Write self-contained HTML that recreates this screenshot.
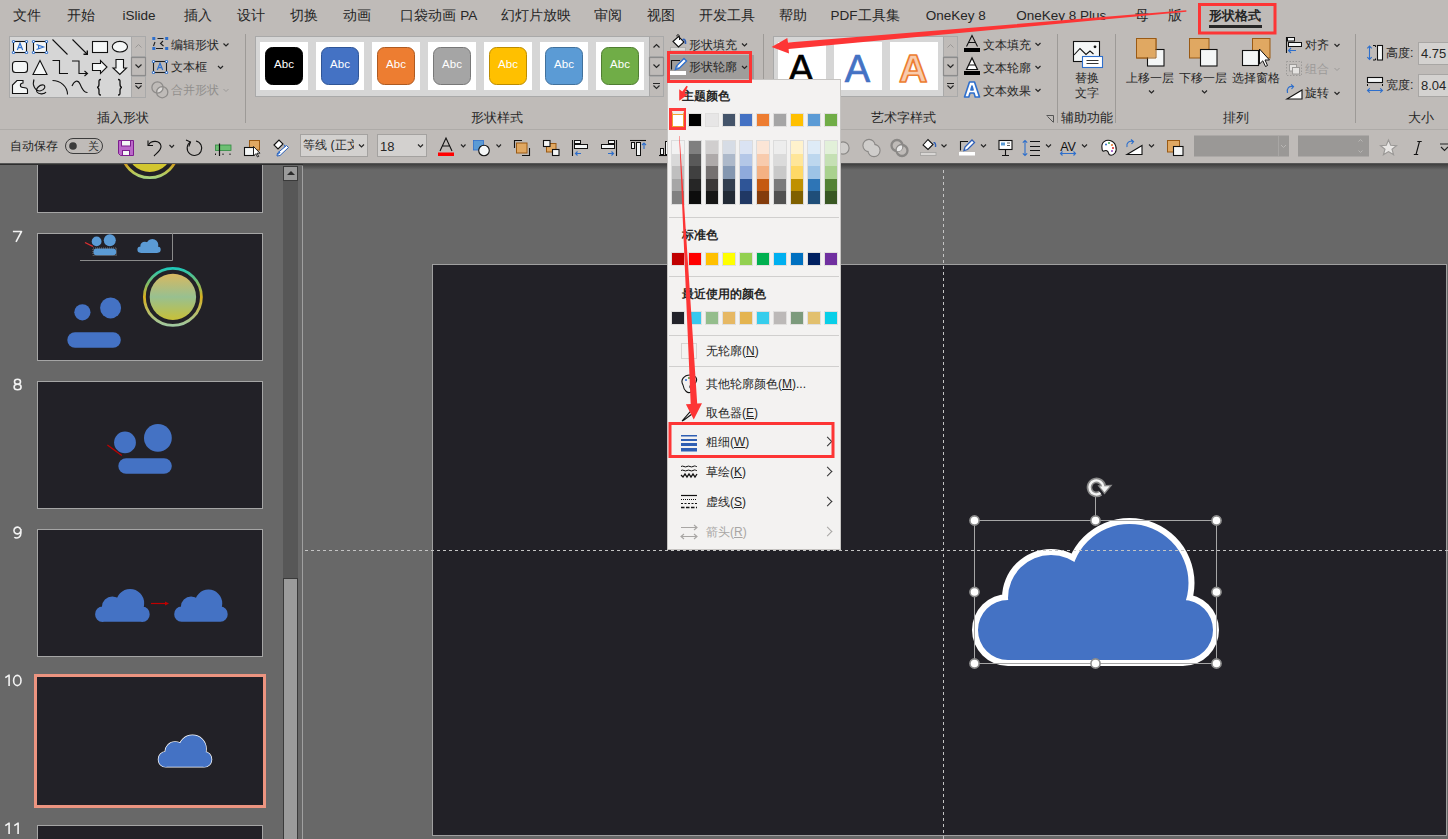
<!DOCTYPE html>
<html><head><meta charset="utf-8">
<style>
*{box-sizing:border-box}
html,body{margin:0;padding:0}
body{width:1448px;height:839px;overflow:hidden;position:relative;background:#686868;font-family:"Liberation Sans",sans-serif;color:#262626}
.a{position:absolute}
.t{position:absolute;white-space:nowrap;line-height:1}
.tab{position:absolute;top:8px;font-size:13.5px;line-height:16px;color:#262626;white-space:nowrap;transform:translateX(-50%)}
.gl{position:absolute;top:111px;font-size:12.5px;line-height:14px;color:#262626;white-space:nowrap;transform:translateX(-50%)}
.vd{position:absolute;top:34px;width:1px;height:89px;background:#9d9a97}
.thumb{position:absolute;left:37px;width:226px;height:128px;background:#222127;border:1px solid #a5a5a5;overflow:hidden}
.num{position:absolute;left:13px;font-size:15.5px;line-height:16px;color:#f4f4f4}
.sw{position:absolute;width:12px;height:12px;border:1px solid rgba(0,0,0,.08)}
.mi{position:absolute;left:706px;font-size:12px;line-height:14px;color:#262626;white-space:nowrap}
.chev{position:absolute;left:824px;width:7px;height:7px;border-right:1.3px solid #333;border-top:1.3px solid #333;transform:rotate(45deg)}
.sep{position:absolute;left:669px;width:170px;height:1px;background:#d0cfce}
</style></head><body>
<!-- ribbon background -->
<div class="a" style="left:0;top:0;width:1448px;height:164px;background:#bfbbb8"></div>
<div class="a" style="left:0;top:129px;width:1448px;height:1px;background:#aeaba8"></div>
<div class="a" style="left:0;top:163px;width:1448px;height:1px;background:#555"></div>

<!-- tabs -->
<div class="tab" style="left:26.9px">文件</div>
<div class="tab" style="left:80.6px">开始</div>
<div class="tab" style="left:139.1px">iSlide</div>
<div class="tab" style="left:197.9px">插入</div>
<div class="tab" style="left:251px">设计</div>
<div class="tab" style="left:304.2px">切换</div>
<div class="tab" style="left:356.8px">动画</div>
<div class="tab" style="left:438.8px">口袋动画 PA</div>
<div class="tab" style="left:535.8px">幻灯片放映</div>
<div class="tab" style="left:608px">审阅</div>
<div class="tab" style="left:660.5px">视图</div>
<div class="tab" style="left:726.7px">开发工具</div>
<div class="tab" style="left:792.6px">帮助</div>
<div class="tab" style="left:865.1px">PDF工具集</div>
<div class="tab" style="left:955.7px">OneKey 8</div>
<div class="tab" style="left:1061.3px">OneKey 8 Plus</div>
<div class="tab" style="left:1142px">母</div>
<div class="tab" style="left:1175px">版</div>
<div class="tab" style="left:1234.5px;font-weight:bold;font-size:13px">形状格式</div>
<div class="a" style="left:1209px;top:25px;width:53px;height:3px;background:#262626"></div>

<!-- ribbon group 1: insert shapes -->
<svg class="a" style="left:0;top:0" width="250" height="130" viewBox="0 0 250 130">
 <rect x="9.5" y="36.5" width="136" height="61" fill="#d6d6d6" stroke="#a9a9a9"/>
 <rect x="131.5" y="36.5" width="14" height="20" fill="#bfbbb8" stroke="#a9a9a9"/>
 <rect x="131.5" y="57.5" width="14" height="18" fill="#bfbbb8" stroke="#8c8c8c" stroke-width="1.2"/>
 <rect x="131.5" y="76.5" width="14" height="21" fill="#bfbbb8" stroke="#a9a9a9"/>
 <path d="M135.5 47.5 L138.5 44.5 L141.5 47.5" fill="none" stroke="#9a9896" stroke-width="1"/>
 <path d="M135.5 64.5 L138.5 67.5 L141.5 64.5" fill="none" stroke="#262626" stroke-width="1.2"/>
 <path d="M135 83.5 H142 M135.5 85.5 L138.5 88.5 L141.5 85.5" fill="none" stroke="#262626" stroke-width="1.1"/>
 <g fill="#f4f6f6" stroke="#111" stroke-width="1.1">
  <rect x="13.5" y="41.5" width="13" height="11"/>
  <rect x="33.5" y="41.5" width="13" height="11"/>
  <rect x="92.5" y="41.5" width="15" height="11"/>
  <ellipse cx="119.9" cy="46.7" rx="7.6" ry="5.3"/>
  <rect x="12.5" y="61.5" width="15" height="11" rx="3"/>
  <path d="M40 60.5 L47 74.5 L33 74.5 Z"/>
  <path d="M92.5 63.5 H100.5 V60.5 L107 67 L100.5 73.5 V70.5 H92.5 Z"/>
  <path d="M116 59.5 H123.5 V68 H126.5 L119.8 74.5 L113 68 H116 Z"/>
  <path d="M12.5 93.5 V85 L17 80.5 H23 V83 C19.5 83 19.5 87.5 23 87.5 C26.5 87.5 27.5 88 27.5 90 V93.5 Z"/>
 </g>
 <g fill="#2e6fcc">
  <circle cx="13.5" cy="41.5" r="1.6"/><circle cx="26.5" cy="41.5" r="1.6"/><circle cx="13.5" cy="52.5" r="1.6"/><circle cx="26.5" cy="52.5" r="1.6"/>
  <circle cx="33.5" cy="41.5" r="1.6"/><circle cx="46.5" cy="41.5" r="1.6"/><circle cx="33.5" cy="52.5" r="1.6"/><circle cx="46.5" cy="52.5" r="1.6"/>
 </g>
 <g fill="#fff"><circle cx="13.5" cy="41.5" r=".7"/><circle cx="26.5" cy="41.5" r=".7"/><circle cx="13.5" cy="52.5" r=".7"/><circle cx="26.5" cy="52.5" r=".7"/><circle cx="33.5" cy="41.5" r=".7"/><circle cx="46.5" cy="41.5" r=".7"/><circle cx="33.5" cy="52.5" r=".7"/><circle cx="46.5" cy="52.5" r=".7"/></g>
 <path d="M17.3 50 L20 43.2 L22.7 50 M18.3 47.7 H21.7" fill="none" stroke="#2e6fcc" stroke-width="1.2"/>
 <path d="M36.5 44.5 L43.5 47 L36.5 49.5 M38.6 45.3 V48.7" fill="none" stroke="#2e6fcc" stroke-width="1.2"/>
 <g fill="none" stroke="#111" stroke-width="1.1">
  <path d="M52.5 39.5 L67.5 54.5"/>
  <path d="M72.5 39.5 L87 54"/><path d="M83.5 54.2 H87.3 V50.4" stroke-width="1.4"/>
  <path d="M52.5 60.5 H59.5 V73.5 H68"/>
  <path d="M72 61 H79 V73.5 H87.5 M84.5 71 L87.5 73.5 L84.5 76"/>
  <path d="M34 79.5 C32 85 35 91 40 91 C45 90 46 86 43.5 85 C40 84 35 89 37 92 C39 95 45 94 46 92"/>
  <path d="M52.5 80.5 C60 80.5 67.5 86 67.5 94.5"/>
  <path d="M72 86 C74 81 78 79 80 84 C82 89 84 93 87.5 92.5"/>
  <path d="M101 79.5 C98.5 79.5 99 81 99 84 C99 86.5 98 87.3 97 87.3 C98 87.3 99 88 99 90.5 C99 93.5 98.5 95 101 95" stroke-width="1.3"/>
  <path d="M118 79.5 C120.5 79.5 120 81 120 84 C120 86.5 121 87.3 122 87.3 C121 87.3 120 88 120 90.5 C120 93.5 120.5 95 118 95" stroke-width="1.3"/>
 </g>
 <!-- edit shape / textbox / merge -->
 <g fill="none" stroke="#1e1e1e" stroke-width="1.1">
  <path d="M157.5 38.5 H163.5 M153.5 46 L155 42 M156 48.5 H163 M163 41 L160.5 43.5 L163.5 46"/>
  <rect x="153.5" y="61.5" width="13" height="11"/>
 </g>
 <g fill="#2e6fcc"><rect x="152.3" y="37" width="3" height="3"/><rect x="165.2" y="37" width="3" height="3"/><rect x="152.3" y="47" width="3" height="3"/><rect x="165.2" y="47" width="3" height="3"/>
  <circle cx="153.5" cy="61.5" r="1.6"/><circle cx="166.5" cy="61.5" r="1.6"/><circle cx="153.5" cy="72.5" r="1.6"/><circle cx="166.5" cy="72.5" r="1.6"/></g>
 <g fill="#fff"><circle cx="153.5" cy="61.5" r=".7"/><circle cx="166.5" cy="61.5" r=".7"/><circle cx="153.5" cy="72.5" r=".7"/><circle cx="166.5" cy="72.5" r=".7"/></g>
 <path d="M157.3 70 L160 63.2 L162.7 70 M158.3 67.7 H161.7" fill="none" stroke="#2e6fcc" stroke-width="1.2"/>
 <path d="M157.5 93 C156.5 89.5 159 87 162.5 87.5 C163.5 91 161 93.5 157.5 93 Z" fill="#dcdad8"/>
 <g fill="none" stroke="#8e8c8a" stroke-width="1.3"><circle cx="157.5" cy="87.5" r="5.6"/><circle cx="162.2" cy="92.2" r="5.6"/></g>
 <g fill="none" stroke="#262626" stroke-width="1.2"><path d="M223.5 43.5 L226 46 L228.5 43.5"/><path d="M218 66 L220.5 68.5 L223 66"/></g>
 <path d="M223.5 89 L226 91.5 L228.5 89" fill="none" stroke="#9c9a98" stroke-width="1"/>
</svg>
<div class="t" style="left:171px;top:38px;font-size:12px;line-height:14px;color:#262626">编辑形状</div>
<div class="t" style="left:171px;top:60px;font-size:12px;line-height:14px;color:#262626">文本框</div>
<div class="t" style="left:171px;top:83px;font-size:12px;line-height:14px;color:#918f8d">合并形状</div>

<!-- ribbon group 2: shape styles -->
<svg class="a" style="left:250px;top:0" width="520" height="130" viewBox="250 0 520 130">
 <rect x="255.5" y="36.5" width="394" height="60" fill="#d6d6d6" stroke="#a9a9a9"/>
 <rect x="260" y="42" width="48" height="48" fill="#fff"/>
 <rect x="265.5" y="47.5" width="37" height="37" rx="7" fill="#000000" stroke="#000000"/>
 <text x="284" y="68" text-anchor="middle" font-family="Liberation Sans" font-size="11.5" fill="#fff">Abc</text>
 <rect x="316" y="42" width="48" height="48" fill="#fff"/>
 <rect x="321.5" y="47.5" width="37" height="37" rx="7" fill="#4472c4" stroke="#2f5597"/>
 <text x="340" y="68" text-anchor="middle" font-family="Liberation Sans" font-size="11.5" fill="#fff">Abc</text>
 <rect x="372" y="42" width="48" height="48" fill="#fff"/>
 <rect x="377.5" y="47.5" width="37" height="37" rx="7" fill="#ed7d31" stroke="#ae5a21"/>
 <text x="396" y="68" text-anchor="middle" font-family="Liberation Sans" font-size="11.5" fill="#fff">Abc</text>
 <rect x="428" y="42" width="48" height="48" fill="#fff"/>
 <rect x="433.5" y="47.5" width="37" height="37" rx="7" fill="#a5a5a5" stroke="#787878"/>
 <text x="452" y="68" text-anchor="middle" font-family="Liberation Sans" font-size="11.5" fill="#fff">Abc</text>
 <rect x="484" y="42" width="48" height="48" fill="#fff"/>
 <rect x="489.5" y="47.5" width="37" height="37" rx="7" fill="#ffc000" stroke="#bc8c00"/>
 <text x="508" y="68" text-anchor="middle" font-family="Liberation Sans" font-size="11.5" fill="#fff">Abc</text>
 <rect x="540" y="42" width="48" height="48" fill="#fff"/>
 <rect x="545.5" y="47.5" width="37" height="37" rx="7" fill="#5b9bd5" stroke="#41719c"/>
 <text x="564" y="68" text-anchor="middle" font-family="Liberation Sans" font-size="11.5" fill="#fff">Abc</text>
 <rect x="596" y="42" width="48" height="48" fill="#fff"/>
 <rect x="601.5" y="47.5" width="37" height="37" rx="7" fill="#70ad47" stroke="#507e32"/>
 <text x="620" y="68" text-anchor="middle" font-family="Liberation Sans" font-size="11.5" fill="#fff">Abc</text>
 <rect x="649.5" y="36.5" width="14" height="20" fill="#bfbbb8" stroke="#a9a9a9"/>
 <rect x="649.5" y="57.5" width="14" height="18" fill="#bfbbb8" stroke="#8c8c8c" stroke-width="1.2"/>
 <rect x="649.5" y="76.5" width="14" height="20" fill="#bfbbb8" stroke="#a9a9a9"/>
 <path d="M653.5 47.5 L656.5 44.5 L659.5 47.5" fill="none" stroke="#262626" stroke-width="1.2"/>
 <path d="M653.5 64.5 L656.5 67.5 L659.5 64.5" fill="none" stroke="#262626" stroke-width="1.2"/>
 <path d="M653 83.5 H660 M653.5 85.5 L656.5 88.5 L659.5 85.5" fill="none" stroke="#262626" stroke-width="1.1"/>
 <rect x="670.5" y="47.5" width="15" height="3.5" fill="#dcdad8" stroke="#aaa8a6" stroke-width=".8"/>
 <path d="M673 41.5 L678.5 36.5 L684 42 L678.5 47 Z" fill="#fff" stroke="#111" stroke-width="1.1"/>
 <path d="M677 36.5 C676.5 34 679 34 679.5 36.5 V40" fill="none" stroke="#111" stroke-width="1"/>
 <path d="M682.5 40 C684 38.5 686 39.5 685.5 44" fill="none" stroke="#2e5fb8" stroke-width="1.6"/>
 <rect x="669" y="55" width="85" height="25" fill="#9f9d9b"/>
 <path d="M671.5 69.5 V60.5 H680" fill="none" stroke="#111" stroke-width="1.1"/>
 <path d="M675.5 69.5 L676.5 66 L684 58.5 L686.5 61 L679 68.5 Z" fill="#fff" stroke="#2e6fcc" stroke-width="1.4"/>
 <path d="M676.5 66 L679 68.5" stroke="#2e6fcc" stroke-width="1"/>
 <rect x="670" y="71" width="16" height="4" fill="#fff"/>
 <path d="M742 43.5 L744.5 46 L747 43.5" fill="none" stroke="#262626" stroke-width="1.2"/>
 <path d="M742 66 L744.5 68.5 L747 66" fill="none" stroke="#262626" stroke-width="1.2"/>
</svg>
<div class="t" style="left:689px;top:38px;font-size:12px;line-height:14px;color:#262626">形状填充</div>
<div class="t" style="left:689px;top:60px;font-size:12px;line-height:14px;color:#262626">形状轮廓</div>
<!-- ribbon group 3: wordart -->
<svg class="a" style="left:760px;top:0" width="300" height="130" viewBox="760 0 300 130">
 <rect x="773.5" y="36.5" width="170" height="60" fill="#d6d6d6" stroke="#a9a9a9"/>
 <rect x="778" y="42" width="48" height="48" fill="#fff"/>
 <rect x="834" y="42" width="48" height="48" fill="#fff"/>
 <rect x="890" y="42" width="48" height="48" fill="#fff"/>
 <text x="801" y="81.5" text-anchor="middle" font-family="Liberation Sans" font-size="38" fill="#000" stroke="#000" stroke-width=".7">A</text>
 <text x="857.5" y="81.5" text-anchor="middle" font-family="Liberation Sans" font-size="38" fill="#4472c4" stroke="#4472c4" stroke-width=".7">A</text>
 <text x="913.3" y="81.5" text-anchor="middle" font-family="Liberation Sans" font-size="39.5" font-weight="bold" fill="#f8cbad" stroke="#ed7d31" stroke-width="1.7" stroke-linejoin="round">A</text>
 <rect x="943.5" y="36.5" width="14" height="20" fill="#bfbbb8" stroke="#a9a9a9"/>
 <rect x="943.5" y="57.5" width="14" height="18" fill="#bfbbb8" stroke="#8c8c8c" stroke-width="1.2"/>
 <rect x="943.5" y="76.5" width="14" height="20" fill="#bfbbb8" stroke="#a9a9a9"/>
 <path d="M947.5 47.5 L950.5 44.5 L953.5 47.5" fill="none" stroke="#9a9896" stroke-width="1"/>
 <path d="M947.5 64.5 L950.5 67.5 L953.5 64.5" fill="none" stroke="#262626" stroke-width="1.2"/>
 <path d="M947 83.5 H954 M947.5 85.5 L950.5 88.5 L953.5 85.5" fill="none" stroke="#262626" stroke-width="1.1"/>
 <path d="M966.5 46.5 L972 35.5 L977.5 46.5 M968.5 42.5 H975.5" fill="none" stroke="#111" stroke-width="1.1"/>
 <rect x="964" y="48" width="16" height="4" fill="#000"/>
 <path d="M966.5 69.5 L972 58 L977.5 69.5 Z" fill="#fff" stroke="#111" stroke-width="1.2"/><path d="M969 65 H975" stroke="#111" stroke-width="1"/>
 <rect x="964" y="71" width="16" height="4" fill="#000"/>
 <path d="M964.5 97 L969.5 82 H974.5 L979.5 97 H975.2 L974 93 H970 L968.8 97 Z M970.9 90 H973.1 L972 86 Z" fill="#fff" stroke="#2e6fcc" stroke-width="1.6" stroke-linejoin="round"/>
 <path d="M1035.5 43 L1038 45.5 L1040.5 43" fill="none" stroke="#262626" stroke-width="1.2"/>
 <path d="M1035.5 66 L1038 68.5 L1040.5 66" fill="none" stroke="#262626" stroke-width="1.2"/>
 <path d="M1035.5 89 L1038 91.5 L1040.5 89" fill="none" stroke="#262626" stroke-width="1.2"/>
 <path d="M1046.5 115.5 H1053.5 V122.5 M1047.5 116.5 L1053 122" fill="none" stroke="#555" stroke-width="1"/>
</svg>
<div class="t" style="left:983px;top:38px;font-size:12px;line-height:14px;color:#262626">文本填充</div>
<div class="t" style="left:983px;top:61px;font-size:12px;line-height:14px;color:#262626">文本轮廓</div>
<div class="t" style="left:983px;top:84px;font-size:12px;line-height:14px;color:#262626">文本效果</div>
<!-- ribbon groups 4-6 -->
<svg class="a" style="left:1060px;top:0" width="388" height="130" viewBox="1060 0 388 130">
 <rect x="1073.5" y="41.5" width="26" height="20" fill="#f4f6f6" stroke="#111" stroke-width="1.1"/>
 <path d="M1074 55 L1080 48.5 L1086 54.5 L1090 51 L1093.5 54" fill="none" stroke="#111" stroke-width="1.1"/>
 <circle cx="1095" cy="46.8" r="1.4" fill="#111"/>
 <rect x="1082.5" y="56.5" width="20" height="11" fill="#fff" stroke="#2e6fcc" stroke-width="1.1"/>
 <path d="M1086.5 60.5 H1098.5 M1086.5 63.5 H1098.5" stroke="#333" stroke-width="1"/>
 <g stroke="#9a5a14" stroke-width="1" fill="#e0a862">
  <rect x="1136.5" y="38.5" width="19.5" height="19.5"/>
  <rect x="1189.5" y="38.5" width="19.5" height="19.5"/>
  <rect x="1252.5" y="38.5" width="17.5" height="19.5"/>
 </g>
 <g stroke="#111" stroke-width="1.1" fill="#f4f6f6">
  <rect x="1147.5" y="49.5" width="16.5" height="16.5"/>
  <rect x="1200.5" y="49.5" width="16.5" height="16.5"/>
  <rect x="1242.5" y="50.5" width="16" height="15"/>
 </g>
 <path d="M1147.5 57.5 V49.5 H1156" fill="none" stroke="#f4f6f6" stroke-width="0"/>
 <rect x="1137" y="39" width="18.5" height="18.5" fill="#e0a862"/>
 <path d="M1136.5 38.5 H1156 V58 H1136.5 Z" fill="none" stroke="#9a5a14" stroke-width="1"/>
 <path d="M1259.5 49 L1259.5 64 L1262.8 60.8 L1265.5 66.5 L1267.5 65.5 L1265 60 L1269.5 60 Z" fill="#fff" stroke="#111" stroke-width="1"/>
 <g fill="none" stroke="#262626" stroke-width="1.2"><path d="M1149 90.5 L1151.5 93 L1154 90.5"/><path d="M1202 90.5 L1204.5 93 L1207 90.5"/></g>
 <!-- align -->
 <path d="M1286.5 37 V53" stroke="#111" stroke-width="1.1"/>
 <rect x="1287.5" y="37.5" width="7" height="3.5" fill="#f4f6f6" stroke="#111" stroke-width="1"/>
 <rect x="1288.5" y="42.5" width="13" height="4" fill="#f4f6f6" stroke="#111" stroke-width="1"/>
 <path d="M1296 50.5 H1288.5 M1291 48 L1288.5 50.5 L1291 53" fill="none" stroke="#2e6fcc" stroke-width="1.1"/>
 <g fill="none" stroke="#9c9a98" stroke-width="1" stroke-dasharray="1.5 1.5"><rect x="1286.5" y="61.5" width="15" height="14"/></g>
 <g fill="#e4e2e0" stroke="#9c9a98" stroke-width="1"><rect x="1289.5" y="64.5" width="7" height="6.5"/><rect x="1292.5" y="67.5" width="7" height="6.5"/></g>
 <path d="M1287 99 L1302 90 V99 Z" fill="#fff" stroke="#111" stroke-width="1.1"/>
 <path d="M1287.5 93 C1286.5 88 1289 86 1293 86.5 M1291 84.5 L1293.5 86.5 L1291.5 89" fill="none" stroke="#2e6fcc" stroke-width="1.2"/>
 <g fill="none" stroke="#262626" stroke-width="1.2"><path d="M1334.5 44 L1337 46.5 L1339.5 44"/><path d="M1334.5 92 L1337 94.5 L1339.5 92"/></g>
 <path d="M1334.5 68 L1337 70.5 L1339.5 68" fill="none" stroke="#9c9a98" stroke-width="1"/>
 <!-- size -->
 <rect x="1377.5" y="45.5" width="5" height="14.5" fill="#f4f6f6" stroke="#111" stroke-width="1.1"/>
 <path d="M1373 45.5 H1375.5 V47 M1375.5 58.5 V60 H1373" fill="none" stroke="#111" stroke-width="1"/>
 <path d="M1369.5 46 V59.5 M1367.3 48.3 L1369.5 46 L1371.7 48.3 M1367.3 57.2 L1369.5 59.5 L1371.7 57.2" fill="none" stroke="#2e6fcc" stroke-width="1.1"/>
 <rect x="1367.5" y="77.5" width="15" height="5" fill="#f4f6f6" stroke="#111" stroke-width="1.1"/>
 <path d="M1367.5 84 V86 M1382.5 84 V86" stroke="#111" stroke-width="1"/>
 <path d="M1367.5 90.5 H1382.5 M1369.8 88.3 L1367.5 90.5 L1369.8 92.7 M1380.2 88.3 L1382.5 90.5 L1380.2 92.7" fill="none" stroke="#2e6fcc" stroke-width="1.1"/>
 <rect x="1418.5" y="42.5" width="40" height="22" fill="#d4d2d0" stroke="#a8a6a4"/>
 <rect x="1418.5" y="74.5" width="40" height="22" fill="#d4d2d0" stroke="#a8a6a4"/>
</svg>
<div class="t" style="left:1075px;top:71px;font-size:12.4px;line-height:14px">替换</div>
<div class="t" style="left:1075px;top:86px;font-size:12.4px;line-height:14px">文字</div>
<div class="t" style="left:1126px;top:71px;font-size:12.4px;line-height:14px">上移一层</div>
<div class="t" style="left:1179px;top:71px;font-size:12.4px;line-height:14px">下移一层</div>
<div class="t" style="left:1232px;top:71px;font-size:12.4px;line-height:14px">选择窗格</div>
<div class="t" style="left:1305px;top:38px;font-size:12.4px;line-height:14px">对齐</div>
<div class="t" style="left:1305px;top:62px;font-size:12.4px;line-height:14px;color:#9c9a98">组合</div>
<div class="t" style="left:1305px;top:86px;font-size:12.4px;line-height:14px">旋转</div>
<div class="t" style="left:1386px;top:46px;font-size:12.4px;line-height:14px">高度:</div>
<div class="t" style="left:1386px;top:78px;font-size:12.4px;line-height:14px">宽度:</div>
<div class="t" style="left:1421px;top:46px;font-size:13px;line-height:15px">4.75</div>
<div class="t" style="left:1421px;top:78px;font-size:13px;line-height:15px">8.04</div>

<!-- group labels -->
<div class="gl" style="left:123px">插入形状</div>
<div class="gl" style="left:497px">形状样式</div>
<div class="gl" style="left:903px">艺术字样式</div>
<div class="gl" style="left:1087px">辅助功能</div>
<div class="gl" style="left:1236px">排列</div>
<div class="gl" style="left:1421px">大小</div>
<div class="vd" style="left:245px"></div>
<div class="vd" style="left:763px"></div>
<div class="vd" style="left:1057px"></div>
<div class="vd" style="left:1115px"></div>
<div class="vd" style="left:1355px"></div>

<!-- quick access toolbar -->
<div class="t" style="left:10px;top:139px;font-size:12.4px;line-height:14px">自动保存</div>
<svg class="a" style="left:0;top:130px" width="1448" height="34" viewBox="0 130 1448 34">
 <rect x="65.5" y="138.5" width="37" height="15" rx="7.5" fill="none" stroke="#3c3c3c" stroke-width="1"/>
 <circle cx="73" cy="146" r="3.8" fill="#3a3a3a"/>
 <!-- save -->
 <path d="M118.5 140.5 H133.5 V155.5 H120.5 L118.5 153.5 Z" fill="#bb68c9" stroke="#7c1c8e" stroke-width="1"/>
 <rect x="121.5" y="140.5" width="9" height="5.5" fill="#f4f6f6" stroke="#7c1c8e" stroke-width="1"/>
 <rect x="122.5" y="150.5" width="7" height="5" fill="#f4f6f6" stroke="#7c1c8e" stroke-width="1"/>
 <!-- undo/redo -->
 <path d="M148.5 145 C151 140 160 140 161 146 C161.5 150 157 153 154 156" fill="none" stroke="#111" stroke-width="1.1"/>
 <path d="M148 140.5 V145.5 H153" fill="none" stroke="#111" stroke-width="1.1"/>
 <path d="M169.5 145 L171.8 147.3 L174 145" fill="none" stroke="#262626" stroke-width="1.2"/>
 <path d="M190.5 142 A7.3 7.3 0 1 0 196 141" fill="none" stroke="#111" stroke-width="1.1"/>
 <path d="M186 140 L190.5 142 L188.8 146.5" fill="none" stroke="#111" stroke-width="1.1"/>
 <!-- green -->
 <rect x="215.5" y="145" width="15.5" height="5.5" fill="#6dbf73" stroke="#2f8a3f" stroke-width=".8"/>
 <path d="M219.5 143.5 V156" stroke="#111" stroke-width="1.2"/>
 <path d="M215.5 153.5 V155 M223 153.5 V155 M230 153.5 V155" stroke="#111" stroke-width="1"/>
 <!-- select -->
 <rect x="249.5" y="140.5" width="10" height="9.5" fill="#e0a862" stroke="#9a5a14" stroke-width="1"/>
 <rect x="244.5" y="147.5" width="9.5" height="8" fill="#f4f6f6" stroke="#111" stroke-width="1.1"/>
 <path d="M253.5 146.5 V156 L255.8 153.7 L257.5 157 L258.7 156.4 L257 153.2 L260 153.2 Z" fill="#fff" stroke="#111" stroke-width=".9"/>
 <!-- format painter -->
 <path d="M274 145 L279 140 L283 144 L278 149 Z" fill="#fff" stroke="#111" stroke-width="1.1"/>
 <path d="M284 145 C286 146 285 148 283 149" fill="none" stroke="#2e6fcc" stroke-width="1.2"/>
 <path d="M288.5 147.5 L280 155.5 L277 156 L277.5 153 L286.5 145.5 Z" fill="#fff" stroke="#2a5fb8" stroke-width="1"/>
 <path d="M277 156 L280.5 152.5 L279 151 Z" fill="#2e6fcc"/>
 <!-- combos -->
 <rect x="300.5" y="134.5" width="67" height="22" fill="#d3d1cf" stroke="#a4a2a0"/>
 <rect x="377.5" y="134.5" width="49" height="22" fill="#d3d1cf" stroke="#a4a2a0"/>
 <path d="M359 144.5 L361.5 147 L364 144.5" fill="none" stroke="#262626" stroke-width="1.2"/>
 <path d="M418 144.5 L420.5 147 L423 144.5" fill="none" stroke="#262626" stroke-width="1.2"/>
 <!-- font color -->
 <path d="M440 151 L446 138 L452 151 M442.3 146 H449.7" fill="none" stroke="#111" stroke-width="1.1"/>
 <rect x="438" y="152.5" width="16" height="3.5" fill="#ff0000"/>
 <path d="M461 144.5 L463.3 146.8 L465.5 144.5" fill="none" stroke="#262626" stroke-width="1.2"/>
 <!-- shape fill -->
 <rect x="473.5" y="140.5" width="10" height="9.5" fill="#5b9bd5" stroke="#2e6fcc" stroke-width=".8"/>
 <circle cx="484" cy="150.5" r="5.3" fill="#f4f6f6" stroke="#111" stroke-width="1.1"/>
 <path d="M496.5 144.5 L498.8 146.8 L501 144.5" fill="none" stroke="#262626" stroke-width="1.2"/>
 <!-- group -->
 <path d="M514.5 148 V140.5 H522" fill="none" stroke="#111" stroke-width="1.1"/>
 <rect x="516.5" y="143" width="10.5" height="10" fill="#e0a862" stroke="#9a5a14" stroke-width="1"/>
 <path d="M529.5 148 V155.5 H522" fill="none" stroke="#111" stroke-width="1.1"/>
 <!-- ungroup -->
 <rect x="546.5" y="143.5" width="9.5" height="8.5" fill="#e0a862" stroke="#9a5a14" stroke-width="1"/>
 <rect x="543.5" y="140.5" width="6.5" height="6" fill="#f4f6f6" stroke="#111" stroke-width="1.1"/>
 <rect x="552.5" y="149.5" width="6.5" height="6" fill="#f4f6f6" stroke="#111" stroke-width="1.1"/>
 <!-- align left/right/top/bottom -->
 <path d="M572.5 140 V156" stroke="#111" stroke-width="1.1"/>
 <rect x="574.5" y="140.5" width="6" height="3" fill="#f4f6f6" stroke="#111" stroke-width="1"/>
 <rect x="574.5" y="144.5" width="13" height="4" fill="#f4f6f6" stroke="#111" stroke-width="1"/>
 <path d="M581 153.5 H575.5 M577.5 151.5 L575.5 153.5 L577.5 155.5" fill="none" stroke="#2e6fcc" stroke-width="1.1"/>
 <path d="M616.5 140 V156" stroke="#111" stroke-width="1.1"/>
 <rect x="608.5" y="140.5" width="6" height="3" fill="#f4f6f6" stroke="#111" stroke-width="1"/>
 <rect x="601.5" y="144.5" width="13" height="4" fill="#f4f6f6" stroke="#111" stroke-width="1"/>
 <path d="M608 153.5 H613.5 M611.5 151.5 L613.5 153.5 L611.5 155.5" fill="none" stroke="#2e6fcc" stroke-width="1.1"/>
 <path d="M630 140.5 H646" stroke="#111" stroke-width="1.1"/>
 <rect x="631.5" y="142.5" width="3" height="6" fill="#f4f6f6" stroke="#111" stroke-width="1"/>
 <rect x="636.5" y="142.5" width="4" height="13" fill="#f4f6f6" stroke="#111" stroke-width="1"/>
 <path d="M644 149 V143 M642 145 L644 143 L646 145" fill="none" stroke="#2e6fcc" stroke-width="1.1"/>
 <path d="M659 155.5 H668" stroke="#111" stroke-width="1.1"/>
 <rect x="660.5" y="148.5" width="3" height="6" fill="#f4f6f6" stroke="#111" stroke-width="1"/>
 <rect x="665.5" y="141.5" width="4" height="13" fill="#f4f6f6" stroke="#111" stroke-width="1"/>
 <!-- right of menu -->
 <g fill="none" stroke="#8a8886" stroke-width="2.3"><circle cx="843" cy="148" r="5.5"/><circle cx="869" cy="145.5" r="5.5"/><circle cx="874" cy="150.5" r="5.5"/><circle cx="897" cy="145.5" r="5.5"/><circle cx="902" cy="150.5" r="5.5"/></g>
 <g fill="#cfcdcb"><circle cx="869" cy="145.5" r="5.5"/><circle cx="874" cy="150.5" r="5.5"/><circle cx="843" cy="148" r="5.5"/></g>
 <path d="M897 151 C896 148 898.5 145 902 145.5 C903 149 900.5 152 897 151 Z" fill="#e8e8e8"/>
 <path d="M923 145 L928 139.5 L933 144.5 L928 149.5 Z" fill="#fff" stroke="#111" stroke-width="1.1"/>
 <path d="M933.5 143 C935 142 936 144 935.5 147" fill="none" stroke="#2e5fb8" stroke-width="1.4"/>
 <rect x="920.5" y="152.5" width="15.5" height="3" fill="#d8d6d4" stroke="#a4a2a0" stroke-width=".8"/>
 <path d="M941.5 144.5 L944 147 L946.5 144.5" fill="none" stroke="#262626" stroke-width="1.2"/>
 <path d="M960.5 150.5 V141.5 H968" fill="none" stroke="#111" stroke-width="1.1"/>
 <path d="M964 150.5 L965 147 L972 140 L974.5 142.5 L967.5 149.5 Z" fill="#fff" stroke="#2e5fb8" stroke-width="1.3"/>
 <rect x="959" y="152" width="16" height="3.5" fill="#fff"/>
 <path d="M981 144.5 L983.5 147 L986 144.5" fill="none" stroke="#262626" stroke-width="1.2"/>
 <rect x="999" y="140.5" width="13" height="9" fill="#fff" stroke="#111" stroke-width="1.1"/>
 <rect x="1001" y="142.5" width="4" height="3" fill="#5b9bd5"/>
 <path d="M1007 143 H1010 M1007 145.5 H1010" stroke="#333" stroke-width=".8"/>
 <path d="M1005.5 150 V155 M1002 155.5 H1009" stroke="#111" stroke-width="1.1"/>
 <path d="M1025 140.5 V155.5 M1022.8 142.7 L1025 140.5 L1027.2 142.7 M1022.8 153.3 L1025 155.5 L1027.2 153.3" fill="none" stroke="#2e6fcc" stroke-width="1.1"/>
 <path d="M1030 141.5 H1040 M1030 146.5 H1040 M1030 150.5 H1040 M1030 155.5 H1040" stroke="#111" stroke-width="1"/>
 <path d="M1046 144.5 L1048.5 147 L1051 144.5" fill="none" stroke="#262626" stroke-width="1.2"/>
 <text x="1068" y="151" text-anchor="middle" font-family="Liberation Sans" font-size="12.5" fill="#111">AV</text>
 <path d="M1060.5 153.5 H1075.5 M1062.5 151.5 L1060.5 153.5 L1062.5 155.5 M1073.5 151.5 L1075.5 153.5 L1073.5 155.5" fill="none" stroke="#2e6fcc" stroke-width="1.1"/>
 <path d="M1082 144.5 L1084.5 147 L1087 144.5" fill="none" stroke="#262626" stroke-width="1.2"/>
 <path d="M1102 148 C1101 142 1106 139.5 1110 140.5 C1116 142 1117.5 149 1115 153 C1113 156 1109 156 1108.5 153 C1108 150.5 1106 150 1104 151 C1102.5 151.5 1102 150 1102 148 Z" fill="#fff" stroke="#111" stroke-width="1.1"/>
 <circle cx="1106" cy="144.5" r="1" fill="#2e6fcc"/><circle cx="1109" cy="143" r="1" fill="#3aa04a"/><circle cx="1112" cy="145" r="1" fill="#e07020"/><circle cx="1113" cy="148" r="1" fill="#e02020"/><circle cx="1112" cy="151" r="1" fill="#9040c0"/>
 <path d="M1127 154.5 L1142 145.5 V154.5 Z" fill="#fff" stroke="#111" stroke-width="1.1"/>
 <path d="M1127 147 C1126 143 1129 140.5 1133 141.5 M1131 139.5 L1133.5 141.5 L1131.5 144" fill="none" stroke="#2e6fcc" stroke-width="1.2"/>
 <path d="M1149 144.5 L1151.5 147 L1154 144.5" fill="none" stroke="#262626" stroke-width="1.2"/>
 <rect x="1167.5" y="140.5" width="12" height="11.5" fill="#e0a862" stroke="#9a5a14" stroke-width="1"/>
 <rect x="1173.5" y="146.5" width="9.5" height="9" fill="#f4f6f6" stroke="#111" stroke-width="1.1"/>
 <rect x="1194" y="135.5" width="95" height="21" fill="#9a9896"/>
 <path d="M1278.5 136 V156" stroke="#a8a6a4" stroke-width="1"/>
 <path d="M1281 145 L1283.5 147.5 L1286 145" fill="none" stroke="#b8b6b4" stroke-width="1"/>
 <rect x="1298" y="135.5" width="71" height="21" fill="#9a9896"/>
 <path d="M1358.5 141.5 L1360.5 139.5 L1362.5 141.5 M1358.5 150.5 L1360.5 152.5 L1362.5 150.5" fill="none" stroke="#b8b6b4" stroke-width="1"/>
 <path d="M1388.5 140 L1390.7 145.3 L1396.5 145.6 L1392 149.2 L1393.6 154.8 L1388.5 151.6 L1383.4 154.8 L1385 149.2 L1380.5 145.6 L1386.3 145.3 Z" fill="#e8e6e4" stroke="#9a9896" stroke-width="1.1"/>
 <path d="M1419.5 141.5 L1416 154.5 M1417.3 141.5 H1421.7 M1413.8 154.5 H1418.2" stroke="#111" stroke-width="1.1"/>
 <path d="M1440 144 H1448 M1441 147 L1444.5 150.5 L1448 147" fill="none" stroke="#222" stroke-width="1.1"/>
</svg>
<div class="t" style="left:87.5px;top:139.5px;font-size:10.5px;line-height:12px;color:#333">关</div>
<div class="a" style="left:303px;top:137px;width:51px;height:17px;overflow:hidden;font-size:12.4px;line-height:17px;white-space:nowrap;color:#262626">等线 (正文</div>
<div class="t" style="left:380px;top:139px;font-size:13px;line-height:15px;color:#262626">18</div>

<!-- left slide panel -->
<div class="a" style="left:0;top:164px;width:303px;height:675px;background:#686868;overflow:hidden">
<div class="a" style="left:283px;top:2px;width:15px;height:673px;background:#575757"></div>
<div class="a" style="left:283px;top:2px;width:15px;height:15px;background:#9b9b9b;border:1px solid #3a3a3a"></div>
<div class="a" style="left:290px;top:7px;width:0;height:0;border-left:4px solid transparent;border-right:4px solid transparent;border-bottom:4px solid #2a2a2a;transform:translateX(-3px)"></div>
<div class="a" style="left:283px;top:414px;width:15px;height:261px;background:#9b9b9b;border:1px solid #3a3a3a;border-bottom:none"></div>
<div class="a" style="left:302px;top:2px;width:1px;height:673px;background:#a0a0a0"></div>
<div class="thumb" style="top:-79px"></div>
<div class="a" style="left:0;top:0;width:303px;height:1px;background:#2e2e2e"></div>
<div class="thumb" style="top:69px"></div>
<div class="thumb" style="top:217px"></div>
<div class="thumb" style="top:365px"></div>
<div class="a" style="left:34px;top:510px;width:232px;height:134px;border:3px solid #ec9480"></div>
<div class="thumb" style="top:513px;left:37px;border:none;width:226px;height:128px"></div>
<div class="thumb" style="top:661px"></div>
<svg class="a" style="left:0;top:0" width="283" height="675" viewBox="0 164 283 675">
 <defs>
  <linearGradient id="g6" x1="0" y1="0" x2="0" y2="1"><stop offset="0" stop-color="#d8b860"/><stop offset=".5" stop-color="#98c090"/><stop offset="1" stop-color="#c8c038"/></linearGradient>
  <linearGradient id="r6" x1="0" y1="0" x2="0" y2="1"><stop offset="0" stop-color="#20c8b8"/><stop offset=".5" stop-color="#d8b020"/><stop offset="1" stop-color="#a0c8a0"/></linearGradient>
  <clipPath id="c6"><rect x="38" y="164" width="224" height="48"/></clipPath>
 </defs>
 <g fill="none" stroke="#f2f2f2" stroke-width="1.6" stroke-linejoin="round">
  <path d="M12.9 231.5 H21.5 L16 241.8"/>
  <ellipse cx="17.5" cy="381.7" rx="3" ry="2.5"/><ellipse cx="17.6" cy="387" rx="3.5" ry="2.8"/>
  <path d="M20.6 529.5 A3.4 3.4 0 1 0 20.6 531.5 M20.9 529 V533 C20.9 537 18 538.2 15.8 537.9 C15 537.8 14.6 537.5 14.3 537.2"/>
  <path d="M5.3 677.7 L9.1 675.2 V686"/><ellipse cx="17.3" cy="680.5" rx="3.7" ry="5.1"/>
  <path d="M5.3 825.7 L9.1 823.2 V834"/><path d="M14.3 825.7 L18.1 823.2 V834"/>
 </g>
 <defs><linearGradient id="r6b" gradientUnits="userSpaceOnUse" x1="0" y1="164" x2="0" y2="180"><stop offset="0" stop-color="#d09a20"/><stop offset=".35" stop-color="#c4c040"/><stop offset="1" stop-color="#a0d890"/></linearGradient></defs><g clip-path="url(#c6)"><circle cx="149.7" cy="149.5" r="28.2" fill="none" stroke="url(#r6b)" stroke-width="2.8"/><circle cx="149.7" cy="149.5" r="22.5" fill="#d2c630"/></g>
 <path d="M80 260.5 H172.5 V233" fill="none" stroke="#8a8a8a" stroke-width="1"/>
 <circle cx="96.6" cy="241.4" r="4.9" fill="#5b9bd5"/><circle cx="109.8" cy="240.2" r="6" fill="#5b9bd5"/>
 <rect x="93.4" y="248.5" width="22.8" height="6.8" rx="3.4" fill="#5b9bd5"/>
 <rect x="93" y="248" width="23.5" height="7.5" fill="none" stroke="#aaa" stroke-width=".6" stroke-dasharray="1 1"/>
 <path d="M85 242.5 L93 246.5" stroke="#e03030" stroke-width="1.3"/>
 <path d="M137.40 249.60 a3.19 3.19 0 1 0 6.38 0 a3.19 3.19 0 1 0 -6.38 0 Z M154.32 249.60 a3.19 3.19 0 1 0 6.38 0 a3.19 3.19 0 1 0 -6.38 0 Z M140.30 246.40 a4.45 4.45 0 1 0 8.89 0 a4.45 4.45 0 1 0 -8.89 0 Z M146.34 244.90 a5.99 5.99 0 1 0 11.99 0 a5.99 5.99 0 1 0 -11.99 0 Z M140.59 246.40 v6.50 h16.92 v-6.50 Z" fill="#5b9bd5"/>
 <circle cx="172.9" cy="296.9" r="28.5" fill="none" stroke="url(#r6)" stroke-width="2.8"/>
 <circle cx="172.9" cy="296.9" r="23.2" fill="url(#g6)"/>
 <circle cx="82.4" cy="312.3" r="8.1" fill="#4472c4"/><circle cx="110.6" cy="307.9" r="10.5" fill="#4472c4"/>
 <rect x="67.3" y="332.3" width="53.5" height="15.4" rx="7.7" fill="#4472c4"/>
 <circle cx="125" cy="442.4" r="10.9" fill="#4472c4"/><circle cx="157.9" cy="437.9" r="13.9" fill="#4472c4"/>
 <rect x="118.3" y="458.2" width="53.5" height="15.6" rx="7.8" fill="#4472c4"/>
 <path d="M107.4 445 L121.8 455.5" stroke="#c00000" stroke-width="1.2"/>
 <path d="M95.10 614.20 a7.48 7.48 0 1 0 14.95 0 a7.48 7.48 0 1 0 -14.95 0 Z M134.75 614.20 a7.48 7.48 0 1 0 14.95 0 a7.48 7.48 0 1 0 -14.95 0 Z M101.90 606.83 a10.42 10.42 0 1 0 20.84 0 a10.42 10.42 0 1 0 -20.84 0 Z M116.06 603.38 a14.05 14.05 0 1 0 28.09 0 a14.05 14.05 0 1 0 -28.09 0 Z M102.58 606.83 v14.97 h39.65 v-14.97 Z" fill="#4472c4"/>
 <path d="M174.20 614.20 a7.33 7.33 0 1 0 14.65 0 a7.33 7.33 0 1 0 -14.65 0 Z M213.05 614.20 a7.33 7.33 0 1 0 14.65 0 a7.33 7.33 0 1 0 -14.65 0 Z M180.86 606.83 a10.21 10.21 0 1 0 20.42 0 a10.21 10.21 0 1 0 -20.42 0 Z M194.73 603.38 a13.76 13.76 0 1 0 27.53 0 a13.76 13.76 0 1 0 -27.53 0 Z M181.53 606.83 v14.97 h38.85 v-14.97 Z" fill="#4472c4"/>
 <path d="M151 603.5 H166" stroke="#c00000" stroke-width="1.2"/><path d="M165 601.5 L169 603.5 L165 605.5 Z" fill="#c00000"/>
 <path d="M158.50 759.38 a7.26 7.26 0 1 0 14.51 0 a7.26 7.26 0 1 0 -14.51 0 Z M196.99 759.38 a7.26 7.26 0 1 0 14.51 0 a7.26 7.26 0 1 0 -14.51 0 Z M165.10 752.28 a10.12 10.12 0 1 0 20.23 0 a10.12 10.12 0 1 0 -20.23 0 Z M178.84 748.95 a13.63 13.63 0 1 0 27.27 0 a13.63 13.63 0 1 0 -27.27 0 Z M165.76 752.28 v14.42 h38.49 v-14.42 Z" fill="#fff" stroke="#fff" stroke-width="1.4"/>
 <path d="M158.50 759.38 a7.26 7.26 0 1 0 14.51 0 a7.26 7.26 0 1 0 -14.51 0 Z M196.99 759.38 a7.26 7.26 0 1 0 14.51 0 a7.26 7.26 0 1 0 -14.51 0 Z M165.10 752.28 a10.12 10.12 0 1 0 20.23 0 a10.12 10.12 0 1 0 -20.23 0 Z M178.84 748.95 a13.63 13.63 0 1 0 27.27 0 a13.63 13.63 0 1 0 -27.27 0 Z M165.76 752.28 v14.42 h38.49 v-14.42 Z" fill="#4472c4"/>
</svg>
</div>

<!-- slide -->
<div class="a" style="left:432px;top:264px;width:1015px;height:572px;background:#222127;border:1px solid #a0a0a0"></div>

<!-- workspace overlay -->
<svg class="a" style="left:0;top:0" width="1448" height="839" viewBox="0 0 1448 839">
 <defs><linearGradient id="shd" x1="0" y1="0" x2="0" y2="1"><stop offset="0" stop-color="#3e3e3e"/><stop offset="1" stop-color="#686868"/></linearGradient></defs>
 <rect x="303" y="164" width="1145" height="6" fill="url(#shd)"/>
 <line x1="943.5" y1="170" x2="943.5" y2="839" stroke="#c4c4c4" stroke-width="1" stroke-dasharray="3 3"/>
 <!-- cloud -->
 <path fill="#fff" d="M972 630 a36 36 0 1 0 72 0 a36 36 0 1 0 -72 0 Z M1147 630 a36 36 0 1 0 72 0 a36 36 0 1 0 -72 0 Z M1002 598 a49 49 0 1 0 98 0 a49 49 0 1 0 -98 0 Z M1064.5 583 a65 65 0 1 0 130 0 a65 65 0 1 0 -130 0 Z M1008 594 v72 h175 v-72 Z"/>
 <path fill="#4472c4" d="M978 630 a30 30 0 1 0 60 0 a30 30 0 1 0 -60 0 Z M1153 630 a30 30 0 1 0 60 0 a30 30 0 1 0 -60 0 Z M1008 598 a43 43 0 1 0 86 0 a43 43 0 1 0 -86 0 Z M1070.5 583 a59 59 0 1 0 118 0 a59 59 0 1 0 -118 0 Z M1008 600 v60 h175 v-60 Z"/>
 <line x1="305" y1="550.5" x2="1448" y2="550.5" stroke="#c4c4c4" stroke-width="1" stroke-dasharray="3 3"/>
 <!-- selection -->
 <g stroke="#a6a6a6" stroke-width="1" fill="none">
  <rect x="974.5" y="520.5" width="242" height="143"/>
  <line x1="1095.5" y1="496" x2="1095.5" y2="520"/>
 </g>
 <g fill="#fff" stroke="#8c8c8c" stroke-width="1.6">
  <circle cx="974.5" cy="520.5" r="4.6"/><circle cx="1095.5" cy="520.5" r="4.6"/><circle cx="1216.5" cy="520.5" r="4.6"/>
  <circle cx="974.5" cy="592" r="4.6"/><circle cx="1216.5" cy="592" r="4.6"/>
  <circle cx="974.5" cy="663.5" r="4.6"/><circle cx="1095.5" cy="663.5" r="4.6"/><circle cx="1216.5" cy="663.5" r="4.6"/>
 </g>
 <g>
  <path d="M1100.5 493.1 A7 7 0 1 1 1103.4 486.8" fill="none" stroke="#8a8a8a" stroke-width="5.6"/>
  <path d="M1097.5 485.2 L1112.5 484.8 L1104.5 494.5 Z" fill="#8a8a8a"/>
  <path d="M1100.5 493.1 A7 7 0 1 1 1103.4 486.8" fill="none" stroke="#f4f4f4" stroke-width="2.4"/>
  <path d="M1099.8 486.5 L1109.5 486.2 L1104.5 492.2 Z" fill="#f4f4f4"/>
 </g>
</svg>
<!-- menu -->
<div class="a" style="left:667px;top:79px;width:174px;height:471px;background:#f3f2f1;border:1px solid #c6c4c2"></div>
<div class="t" style="left:682px;top:89px;font-size:12px;line-height:14px;font-weight:bold;color:#262626">主题颜色</div>
<div class="a" style="left:669px;top:108px;width:17px;height:22px;background:#ff3b3b"></div>
<div class="a" style="left:672px;top:111px;width:12px;height:16px;background:#fff;border:1px solid #f0a030;border-top:3px solid #eee"></div>
<div class="a" style="left:673px;top:114px;width:10px;height:1px;background:#f0a030"></div>
<div class="a" style="left:689px;top:114px;width:12px;height:12px;background:#000000;outline:1px solid rgba(0,0,0,.08)"></div>
<div class="a" style="left:706px;top:114px;width:12px;height:12px;background:#e7e6e6;outline:1px solid rgba(0,0,0,.08)"></div>
<div class="a" style="left:723px;top:114px;width:12px;height:12px;background:#44546a;outline:1px solid rgba(0,0,0,.08)"></div>
<div class="a" style="left:740px;top:114px;width:12px;height:12px;background:#4472c4;outline:1px solid rgba(0,0,0,.08)"></div>
<div class="a" style="left:757px;top:114px;width:12px;height:12px;background:#ed7d31;outline:1px solid rgba(0,0,0,.08)"></div>
<div class="a" style="left:774px;top:114px;width:12px;height:12px;background:#a5a5a5;outline:1px solid rgba(0,0,0,.08)"></div>
<div class="a" style="left:791px;top:114px;width:12px;height:12px;background:#ffc000;outline:1px solid rgba(0,0,0,.08)"></div>
<div class="a" style="left:808px;top:114px;width:12px;height:12px;background:#5b9bd5;outline:1px solid rgba(0,0,0,.08)"></div>
<div class="a" style="left:825px;top:114px;width:12px;height:12px;background:#70ad47;outline:1px solid rgba(0,0,0,.08)"></div>
<div class="a" style="left:671px;top:140px;width:14px;height:65px;background:#dcdcdc"></div>
<div class="a" style="left:672px;top:141px;width:12px;height:13px;background:#f2f2f2"></div>
<div class="a" style="left:672px;top:154px;width:12px;height:12px;background:#d9d9d9"></div>
<div class="a" style="left:672px;top:166px;width:12px;height:13px;background:#bfbfbf"></div>
<div class="a" style="left:672px;top:179px;width:12px;height:12px;background:#a6a6a6"></div>
<div class="a" style="left:672px;top:191px;width:12px;height:13px;background:#808080"></div>
<div class="a" style="left:688px;top:140px;width:14px;height:65px;background:#dcdcdc"></div>
<div class="a" style="left:689px;top:141px;width:12px;height:13px;background:#7f7f7f"></div>
<div class="a" style="left:689px;top:154px;width:12px;height:12px;background:#595959"></div>
<div class="a" style="left:689px;top:166px;width:12px;height:13px;background:#404040"></div>
<div class="a" style="left:689px;top:179px;width:12px;height:12px;background:#262626"></div>
<div class="a" style="left:689px;top:191px;width:12px;height:13px;background:#0d0d0d"></div>
<div class="a" style="left:705px;top:140px;width:14px;height:65px;background:#dcdcdc"></div>
<div class="a" style="left:706px;top:141px;width:12px;height:13px;background:#d0cece"></div>
<div class="a" style="left:706px;top:154px;width:12px;height:12px;background:#aeaaaa"></div>
<div class="a" style="left:706px;top:166px;width:12px;height:13px;background:#757171"></div>
<div class="a" style="left:706px;top:179px;width:12px;height:12px;background:#3b3838"></div>
<div class="a" style="left:706px;top:191px;width:12px;height:13px;background:#161616"></div>
<div class="a" style="left:722px;top:140px;width:14px;height:65px;background:#dcdcdc"></div>
<div class="a" style="left:723px;top:141px;width:12px;height:13px;background:#d6dce5"></div>
<div class="a" style="left:723px;top:154px;width:12px;height:12px;background:#adb9ca"></div>
<div class="a" style="left:723px;top:166px;width:12px;height:13px;background:#8497b0"></div>
<div class="a" style="left:723px;top:179px;width:12px;height:12px;background:#333f50"></div>
<div class="a" style="left:723px;top:191px;width:12px;height:13px;background:#222a35"></div>
<div class="a" style="left:739px;top:140px;width:14px;height:65px;background:#dcdcdc"></div>
<div class="a" style="left:740px;top:141px;width:12px;height:13px;background:#dae3f3"></div>
<div class="a" style="left:740px;top:154px;width:12px;height:12px;background:#b4c7e7"></div>
<div class="a" style="left:740px;top:166px;width:12px;height:13px;background:#8faadc"></div>
<div class="a" style="left:740px;top:179px;width:12px;height:12px;background:#2f5597"></div>
<div class="a" style="left:740px;top:191px;width:12px;height:13px;background:#203864"></div>
<div class="a" style="left:756px;top:140px;width:14px;height:65px;background:#dcdcdc"></div>
<div class="a" style="left:757px;top:141px;width:12px;height:13px;background:#fbe5d6"></div>
<div class="a" style="left:757px;top:154px;width:12px;height:12px;background:#f8cbad"></div>
<div class="a" style="left:757px;top:166px;width:12px;height:13px;background:#f4b183"></div>
<div class="a" style="left:757px;top:179px;width:12px;height:12px;background:#c55a11"></div>
<div class="a" style="left:757px;top:191px;width:12px;height:13px;background:#843c0c"></div>
<div class="a" style="left:773px;top:140px;width:14px;height:65px;background:#dcdcdc"></div>
<div class="a" style="left:774px;top:141px;width:12px;height:13px;background:#ededed"></div>
<div class="a" style="left:774px;top:154px;width:12px;height:12px;background:#dbdbdb"></div>
<div class="a" style="left:774px;top:166px;width:12px;height:13px;background:#c9c9c9"></div>
<div class="a" style="left:774px;top:179px;width:12px;height:12px;background:#7b7b7b"></div>
<div class="a" style="left:774px;top:191px;width:12px;height:13px;background:#525252"></div>
<div class="a" style="left:790px;top:140px;width:14px;height:65px;background:#dcdcdc"></div>
<div class="a" style="left:791px;top:141px;width:12px;height:13px;background:#fff2cc"></div>
<div class="a" style="left:791px;top:154px;width:12px;height:12px;background:#ffe699"></div>
<div class="a" style="left:791px;top:166px;width:12px;height:13px;background:#ffd966"></div>
<div class="a" style="left:791px;top:179px;width:12px;height:12px;background:#bf9000"></div>
<div class="a" style="left:791px;top:191px;width:12px;height:13px;background:#7f6000"></div>
<div class="a" style="left:807px;top:140px;width:14px;height:65px;background:#dcdcdc"></div>
<div class="a" style="left:808px;top:141px;width:12px;height:13px;background:#deebf7"></div>
<div class="a" style="left:808px;top:154px;width:12px;height:12px;background:#bdd7ee"></div>
<div class="a" style="left:808px;top:166px;width:12px;height:13px;background:#9dc3e6"></div>
<div class="a" style="left:808px;top:179px;width:12px;height:12px;background:#2e75b6"></div>
<div class="a" style="left:808px;top:191px;width:12px;height:13px;background:#1f4e79"></div>
<div class="a" style="left:824px;top:140px;width:14px;height:65px;background:#dcdcdc"></div>
<div class="a" style="left:825px;top:141px;width:12px;height:13px;background:#e2f0d9"></div>
<div class="a" style="left:825px;top:154px;width:12px;height:12px;background:#c5e0b4"></div>
<div class="a" style="left:825px;top:166px;width:12px;height:13px;background:#a9d18e"></div>
<div class="a" style="left:825px;top:179px;width:12px;height:12px;background:#548235"></div>
<div class="a" style="left:825px;top:191px;width:12px;height:13px;background:#385723"></div>
<div class="sep" style="top:217px"></div>
<div class="t" style="left:682px;top:228px;font-size:12px;line-height:14px;font-weight:bold;color:#262626">标准色</div>
<div class="a" style="left:672px;top:253px;width:12px;height:12px;background:#c00000;outline:1px solid rgba(0,0,0,.08)"></div>
<div class="a" style="left:689px;top:253px;width:12px;height:12px;background:#ff0000;outline:1px solid rgba(0,0,0,.08)"></div>
<div class="a" style="left:706px;top:253px;width:12px;height:12px;background:#ffc000;outline:1px solid rgba(0,0,0,.08)"></div>
<div class="a" style="left:723px;top:253px;width:12px;height:12px;background:#ffff00;outline:1px solid rgba(0,0,0,.08)"></div>
<div class="a" style="left:740px;top:253px;width:12px;height:12px;background:#92d050;outline:1px solid rgba(0,0,0,.08)"></div>
<div class="a" style="left:757px;top:253px;width:12px;height:12px;background:#00b050;outline:1px solid rgba(0,0,0,.08)"></div>
<div class="a" style="left:774px;top:253px;width:12px;height:12px;background:#00b0f0;outline:1px solid rgba(0,0,0,.08)"></div>
<div class="a" style="left:791px;top:253px;width:12px;height:12px;background:#0070c0;outline:1px solid rgba(0,0,0,.08)"></div>
<div class="a" style="left:808px;top:253px;width:12px;height:12px;background:#002060;outline:1px solid rgba(0,0,0,.08)"></div>
<div class="a" style="left:825px;top:253px;width:12px;height:12px;background:#7030a0;outline:1px solid rgba(0,0,0,.08)"></div>
<div class="sep" style="top:276px"></div>
<div class="t" style="left:682px;top:287px;font-size:12px;line-height:14px;font-weight:bold;color:#262626">最近使用的颜色</div>
<div class="a" style="left:672px;top:312px;width:12px;height:12px;background:#22222a;outline:1px solid rgba(0,0,0,.08)"></div>
<div class="a" style="left:689px;top:312px;width:12px;height:12px;background:#38c8ee;outline:1px solid rgba(0,0,0,.08)"></div>
<div class="a" style="left:706px;top:312px;width:12px;height:12px;background:#94bd8c;outline:1px solid rgba(0,0,0,.08)"></div>
<div class="a" style="left:723px;top:312px;width:12px;height:12px;background:#e6b864;outline:1px solid rgba(0,0,0,.08)"></div>
<div class="a" style="left:740px;top:312px;width:12px;height:12px;background:#e4b450;outline:1px solid rgba(0,0,0,.08)"></div>
<div class="a" style="left:757px;top:312px;width:12px;height:12px;background:#36cdec;outline:1px solid rgba(0,0,0,.08)"></div>
<div class="a" style="left:774px;top:312px;width:12px;height:12px;background:#bcb9b8;outline:1px solid rgba(0,0,0,.08)"></div>
<div class="a" style="left:791px;top:312px;width:12px;height:12px;background:#7c9a7c;outline:1px solid rgba(0,0,0,.08)"></div>
<div class="a" style="left:808px;top:312px;width:12px;height:12px;background:#e2c06e;outline:1px solid rgba(0,0,0,.08)"></div>
<div class="a" style="left:825px;top:312px;width:12px;height:12px;background:#08cfe8;outline:1px solid rgba(0,0,0,.08)"></div>
<div class="sep" style="top:335px"></div>
<div class="sep" style="top:366px"></div>
<div class="mi" style="top:344px;color:#262626">无轮廓(<u>N</u>)</div>
<div class="mi" style="top:376.5px;color:#262626">其他轮廓颜色(<u>M</u>)...</div>
<div class="mi" style="top:406px;color:#262626">取色器(<u>E</u>)</div>
<div class="mi" style="top:435px;color:#262626">粗细(<u>W</u>)</div>
<div class="chev" style="top:438px;border-color:#333"></div>
<div class="mi" style="top:465px;color:#262626">草绘(<u>K</u>)</div>
<div class="chev" style="top:468px;border-color:#333"></div>
<div class="mi" style="top:495px;color:#262626">虚线(<u>S</u>)</div>
<div class="chev" style="top:498px;border-color:#333"></div>
<div class="mi" style="top:525px;color:#a8a6a4">箭头(<u>R</u>)</div>
<div class="chev" style="top:528px;border-color:#a8a6a4"></div>
<svg class="a" style="left:667px;top:330px" width="40" height="220" viewBox="667 330 40 220">
 <rect x="681.5" y="343.5" width="15" height="15" fill="none" stroke="#d6d4d2"/>
 <g fill="none" stroke="#111" stroke-width="1.1">
  <path d="M683 385 C680 380 684 375 690 375 C695 375 698 378 696 382 C695 385 691 384 690 386 C689 388 693 390 691 392 C688 394 684 391 683 385 Z"/>
  <path d="M682 421 L690 412 L693 409 L696 406 L698 408 L692 414 L684 420 Z"/>
 </g>
 <circle cx="686" cy="380" r="1" fill="#2a6bd4"/><circle cx="689" cy="378" r="1" fill="#3a9a3a"/><circle cx="693" cy="379" r="1" fill="#d04040"/>
 <g fill="#2f5fb3"><rect x="681" y="435" width="16" height="1.5"/><rect x="681" y="439" width="16" height="2"/><rect x="681" y="443" width="16" height="3"/><rect x="681" y="448" width="16" height="3.5"/></g>
 <g fill="none" stroke="#111" stroke-width="1"><path d="M681 466.5 C683 465 685 468 687 466.5 C689 465 691 468 693 466.5 C695 465 696 467 697 466.5"/><path d="M681 470.5 C683 469 685 472 687 470.5 C689 469 691 472 693 470.5 C695 469 696 471 697 470.5"/><path d="M681 475 L683 477 L685 474 L687 477 L689 474 L691 477 L693 474 L695 477 L697 474" stroke-width="1.3"/></g>
 <g stroke="#111"><line x1="681" y1="495.5" x2="697" y2="495.5" stroke-width="1.2"/><line x1="681" y1="499.5" x2="697" y2="499.5" stroke-dasharray="1 1"/><line x1="681" y1="503.5" x2="697" y2="503.5" stroke-dasharray="2 1.5"/><line x1="681" y1="507.5" x2="697" y2="507.5" stroke-dasharray="3.5 1.5" stroke-width="1.3"/></g>
 <g fill="none" stroke="#a8a6a4" stroke-width="1.1"><path d="M681 527.5 H697 M694 525 L697 527.5 L694 530"/><path d="M681 536.5 H697 M684 534 L681 536.5 L684 539 M694 534 L697 536.5 L694 539"/></g>
</svg>
<!-- annotations -->
<svg class="a" style="left:0;top:0" width="1448" height="839" viewBox="0 0 1448 839">
 <g fill="none" stroke="#fd3535" stroke-width="3">
  <rect x="1199.5" y="4.5" width="75.5" height="28.5"/>
  <rect x="668.5" y="52.5" width="82" height="29"/>
  <rect x="670" y="423.5" width="163" height="33"/>
 </g>
 <g fill="#fd3535">
  <path d="M1186.3 10.3 L788 42.5 L787.3 38.1 L771.6 47 L789 53.4 L788.6 49 L1186.4 11.8 Z"/>
  <path d="M679.2 136 L690.7 404 L685.9 404.2 L693.75 419.4 L702 403.3 L697.2 403.6 L679.6 136 Z"/>
  <path d="M679.2 100.7 L679.2 89.2 L682.3 91.6 L686.5 85.8 L687.8 86.6 L684.6 93.4 L687.8 94.5 Z"/>
 </g>
</svg>
</body></html>
